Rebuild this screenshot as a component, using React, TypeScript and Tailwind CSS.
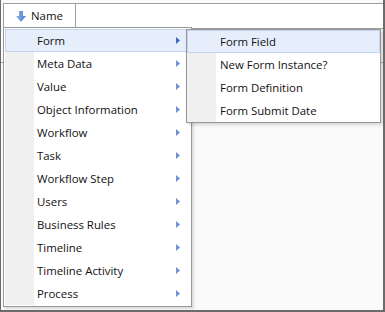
import React from 'react';

const mainItems = [
    'Form',
    'Meta Data',
    'Value',
    'Object Information',
    'Workflow',
    'Task',
    'Workflow Step',
    'Users',
    'Business Rules',
    'Timeline',
    'Timeline Activity',
    'Process',
];

const subItems = ['Form Field', 'New Form Instance?', 'Form Definition', 'Form Submit Date'];

function Arrow({ active }: { active?: boolean }) {
    return (
        <svg width="4" height="7" viewBox="0 0 4 7" className="shrink-0">
            <path d="M0 0 L4 3.5 L0 7 Z" fill={active ? '#3f68c4' : '#6f92d2'} />
        </svg>
    );
}

function SortIcon() {
    return (
        <svg width="10" height="11" viewBox="0 0 10 11">
            <defs>
                <linearGradient id="sortg" x1="0" y1="0" x2="1" y2="0">
                    <stop offset="0" stopColor="#8fb2ec" />
                    <stop offset="1" stopColor="#4f7fd0" />
                </linearGradient>
            </defs>
            <path d="M3 0 H7 V5 H10 L5 11 L0 5 H3 Z" fill="url(#sortg)" />
        </svg>
    );
}

export default function App() {
    return (
        <div className="relative w-[385px] h-[312px] bg-[#fafafa] border-l border-r-2 border-b-2 border-[#6b6b6b] font-['Segoe_UI','Open_Sans',sans-serif] text-[11.4px] text-[#111] overflow-hidden">
            {/* grid header */}
            <div className="mt-[3px] ml-[2px] h-[26px] bg-white border-t border-b border-l border-[#a0a0a0] flex">
                <div className="w-[72px] border-r border-[#a0a0a0] flex items-center pl-[12px] gap-[5px]">
                    <SortIcon />
                    <span>Name</span>
                </div>
            </div>
            <div className="mt-[33px] h-px bg-[#a0a0a0]"></div>

            {/* main context menu */}
            <div className="absolute left-[2px] top-[27px] w-[189px] bg-white border border-[#979797] p-px shadow-[2px_2px_2px_rgba(0,0,0,0.12)]">
                <div className="relative">
                    <div className="absolute left-0 top-0 bottom-0 w-[29px] bg-[#f0f0f0]"></div>
                    {mainItems.map((item, idx) => (
                        <div
                            key={item}
                            className={`relative h-[23px] flex items-center pl-[31px] pr-[9px] border ${idx === 0 ? 'bg-[#e6eefb] border-[#c4d5f1]' : 'border-transparent'}`}
                        >
                            <span className="flex-1">{item}</span>
                            <Arrow active={idx === 0} />
                        </div>
                    ))}
                </div>
            </div>

            {/* sub menu */}
            <div className="absolute left-[185px] top-[29px] w-[195px] bg-white border border-[#979797] shadow-[2px_2px_3px_rgba(0,0,0,0.15)]">
                <div className="relative">
                    <div className="absolute left-0 top-0 bottom-0 w-[29px] bg-[#f0f0f0]"></div>
                    {subItems.map((item, idx) => (
                        <div
                            key={item}
                            className={`relative h-[23px] flex items-center pl-[32px] border ${idx === 0 ? 'bg-[#e6eefb] border-[#c4d5f1]' : 'border-transparent'}`}
                        >
                            {item}
                        </div>
                    ))}
                </div>
            </div>
        </div>
    );
}
